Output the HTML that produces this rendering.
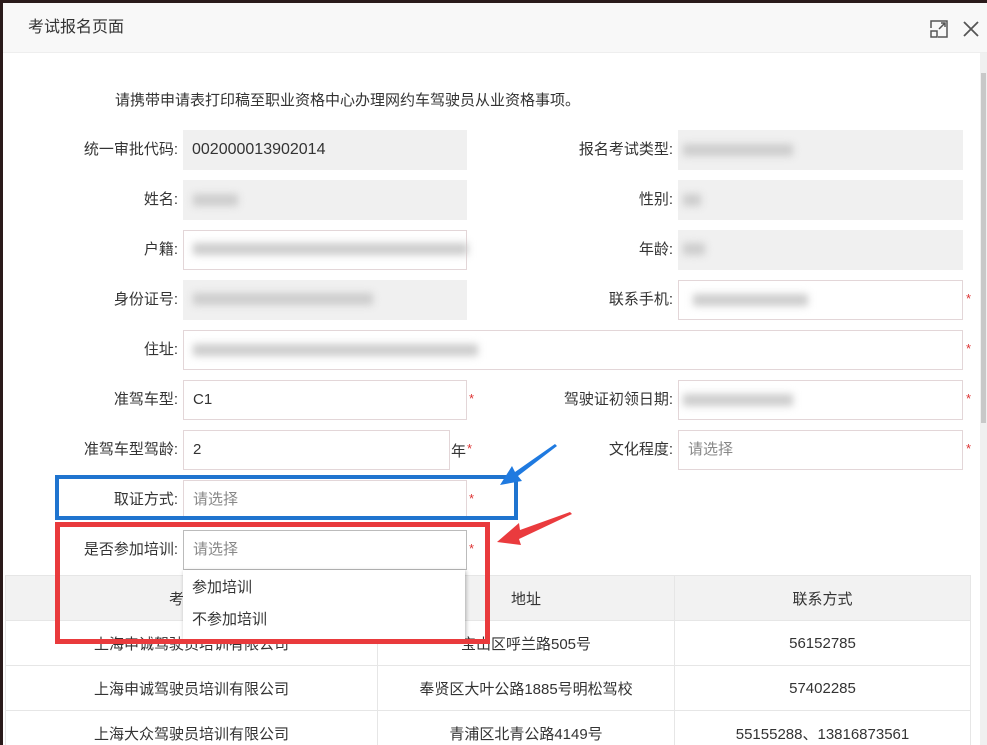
<!DOCTYPE html>
<html><head><meta charset="utf-8"><style>
*{margin:0;padding:0;box-sizing:border-box}
body{width:987px;height:745px;overflow:hidden;background:#2a1a1a;font-family:"Liberation Sans","Noto Sans CJK SC",sans-serif;font-size:15px;color:#333;position:relative}
.dlg{position:absolute;left:3px;top:3px;width:984px;height:742px;background:#fff;overflow:hidden}
.hd{position:absolute;left:0;top:0;width:984px;height:50px;background:#f8f8f8;border-bottom:1px solid #eee;font-size:16px;line-height:50px;padding-left:25px;color:#333}
.a{position:absolute}
.lb{position:absolute;text-align:right;line-height:40px;color:#333}
.ro{position:absolute;background:#f0f0f0;height:40px;line-height:40px;padding-left:9px}
.in{position:absolute;background:#fff;border:1px solid #e3d6d8;height:40px;line-height:38px;padding-left:9px}
.ph{color:#888}
.st{position:absolute;color:#d33;font-size:13px}
.blur{position:absolute;background:#ccc;filter:blur(4px);height:12px}
table{position:absolute;left:2px;top:572px;border-collapse:collapse;width:966px}
td,th{border:1px solid #e6e6e6;text-align:center;height:45px;font-weight:normal;font-size:15px}
th{background:#f2f2f2}
.scroll{position:absolute;right:0;top:50px;width:7px;height:692px;background:#f0f0f0}
.scroll div{position:absolute;left:1px;top:20px;width:5px;height:350px;background:#c8c8c8}
</style></head><body>
<div class="dlg">
<div class="hd">考试报名页面</div>
<svg class="a" style="left:927px;top:17px" width="18" height="18" viewBox="0 0 18 18" fill="none" stroke="#555" stroke-width="1.5"><path d="M1 8V1h16v16H8"/><rect x="1" y="11" width="6" height="6"/><path d="M9 9l6-6M11 3h4v4"/></svg>
<svg class="a" style="left:960px;top:18px" width="16" height="16" viewBox="0 0 16 16" stroke="#555" stroke-width="1.8"><path d="M1 1l14 14M15 1L1 15"/></svg>
<div class="scroll"><div></div></div>
<div class="a" style="left:112px;top:86px">请携带申请表打印稿至职业资格中心办理网约车驾驶员从业资格事项。</div>

<div class="lb" style="left:20px;width:155px;top:127px">统一审批代码:</div>
<div class="ro" style="left:180px;top:127px;width:284px;font-size:16px">002000013902014</div>
<div class="lb" style="left:500px;width:170px;top:127px">报名考试类型:</div>
<div class="ro" style="left:675px;top:127px;width:285px"></div><div class="blur" style="left:680px;top:141px;width:110px"></div>

<div class="lb" style="left:20px;width:155px;top:177px">姓名:</div>
<div class="ro" style="left:180px;top:177px;width:284px"></div><div class="blur" style="left:190px;top:191px;width:45px"></div>
<div class="lb" style="left:500px;width:170px;top:177px">性别:</div>
<div class="ro" style="left:675px;top:177px;width:285px"></div><div class="blur" style="left:680px;top:191px;width:18px"></div>

<div class="lb" style="left:20px;width:155px;top:227px">户籍:</div>
<div class="in" style="left:180px;top:227px;width:284px"></div><div class="blur" style="left:190px;top:240px;width:275px"></div>
<div class="lb" style="left:500px;width:170px;top:227px">年龄:</div>
<div class="ro" style="left:675px;top:227px;width:285px"></div><div class="blur" style="left:680px;top:240px;width:22px"></div>

<div class="lb" style="left:20px;width:155px;top:277px">身份证号:</div>
<div class="ro" style="left:180px;top:277px;width:284px"></div><div class="blur" style="left:190px;top:290px;width:180px"></div>
<div class="lb" style="left:500px;width:170px;top:277px">联系手机:</div>
<div class="in" style="left:675px;top:277px;width:285px"></div><div class="blur" style="left:690px;top:291px;width:115px"></div><div class="st" style="left:963px;top:288px">*</div>

<div class="lb" style="left:20px;width:155px;top:327px">住址:</div>
<div class="in" style="left:180px;top:327px;width:780px"></div><div class="blur" style="left:190px;top:341px;width:285px"></div><div class="st" style="left:963px;top:338px">*</div>

<div class="lb" style="left:20px;width:155px;top:377px">准驾车型:</div>
<div class="in" style="left:180px;top:377px;width:284px">C1</div><div class="st" style="left:466px;top:388px">*</div>
<div class="lb" style="left:500px;width:170px;top:377px">驾驶证初领日期:</div>
<div class="in" style="left:675px;top:377px;width:285px"></div><div class="blur" style="left:680px;top:391px;width:110px"></div><div class="st" style="left:963px;top:388px">*</div>

<div class="lb" style="left:20px;width:155px;top:427px">准驾车型驾龄:</div>
<div class="in" style="left:180px;top:427px;width:267px">2</div><div class="a" style="left:448px;top:437px">年</div><div class="st" style="left:464px;top:438px">*</div>
<div class="lb" style="left:500px;width:170px;top:427px">文化程度:</div>
<div class="in ph" style="left:675px;top:427px;width:285px">请选择</div><div class="st" style="left:963px;top:438px">*</div>

<div class="lb" style="left:20px;width:155px;top:477px">取证方式:</div>
<div class="in ph" style="left:180px;top:477px;width:284px">请选择</div><div class="st" style="left:466px;top:488px">*</div>

<table><tr><th style="width:372px">考试线</th><th style="width:297px">地址</th><th>联系方式</th></tr>
<tr><td>上海申诚驾驶员培训有限公司</td><td>宝山区呼兰路505号</td><td>56152785</td></tr>
<tr><td>上海申诚驾驶员培训有限公司</td><td>奉贤区大叶公路1885号明松驾校</td><td>57402285</td></tr>
<tr><td>上海大众驾驶员培训有限公司</td><td>青浦区北青公路4149号</td><td>55155288、13816873561</td></tr></table>

<div class="lb" style="left:20px;width:155px;top:527px">是否参加培训:</div>
<div class="in ph" style="left:180px;top:527px;width:284px;border-color:#bbb">请选择</div><div class="st" style="left:466px;top:538px">*</div>
<div class="a" style="left:180px;top:567px;width:282px;height:70px;background:#fff;box-shadow:1px 1px 4px rgba(0,0,0,.3);padding-left:9px;line-height:32px;padding-top:2px">参加培训<br>不参加培训</div>

<div class="a" style="left:52px;top:472px;width:463px;height:45px;border:4px solid #1f74cf"></div>
<div class="a" style="left:52px;top:519px;width:435px;height:122px;border:5px solid #e93a3c"></div>
<svg class="a" style="left:490px;top:435px" width="90" height="115" viewBox="0 0 90 115">
<path d="M62 6L22 34l-3-6-12 19 22-4-4-5L64 8z" fill="#1f7ae0"/>
<path d="M77 74L27 92l-1-7L4 104l24 3-2-6L79 76z" fill="#ea3b3e"/>
</svg>
</div>
</body></html>
